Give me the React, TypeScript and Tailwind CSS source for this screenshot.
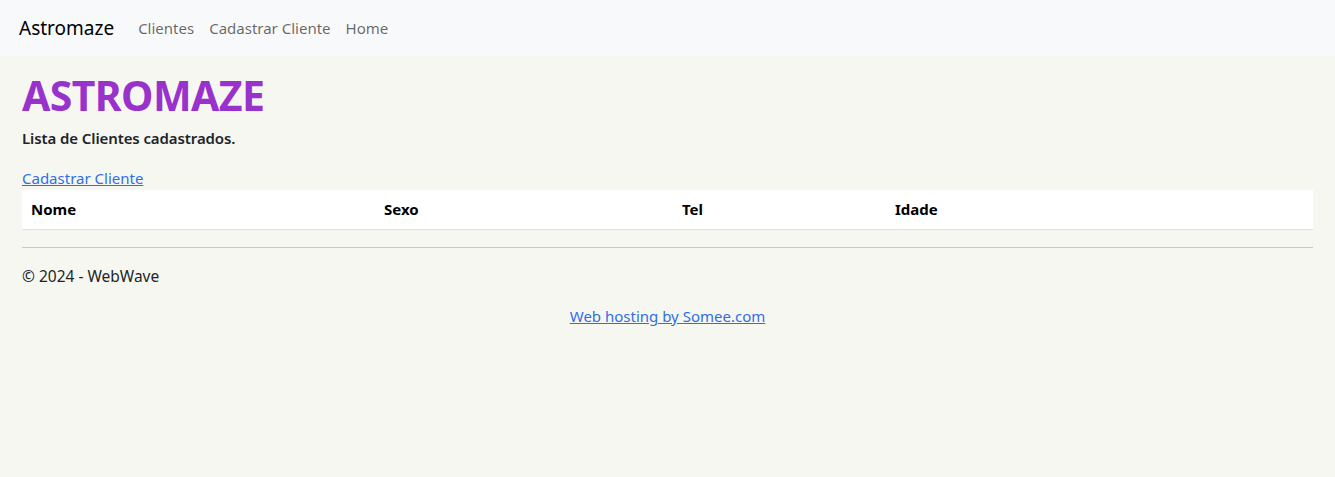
export default function App() {
  const font = { fontFamily: '"Segoe UI", "Noto Sans", "Open Sans", sans-serif' };
  return (
    <div className="min-h-[477px] bg-[#f7f7f1] text-[#212529] text-[15px]" style={font}>
      <nav className="h-[56px] bg-[#f8f9fa] flex items-center px-[19px]">
        <span className="text-[19px] text-black mr-[24px]">Astromaze</span>
        <div className="flex gap-[15px] text-[15px] text-[#00000099]">
          <span>Clientes</span>
          <span>Cadastrar Cliente</span>
          <span>Home</span>
        </div>
      </nav>
      <main className="px-[22px]">
        <h1 className="text-[41px] font-bold text-[#9932cc] leading-none mt-[19px] tracking-[-0.6px]">ASTROMAZE</h1>
        <p className="font-semibold mt-[11px] text-[15px] tracking-[-0.1px]">Lista de Clientes cadastrados.</p>
        <a className="block mt-[17px] text-[#2f6ee8] underline leading-[22px]">Cadastrar Cliente</a>
        <table className="w-full mt-[1px] bg-white border-b border-[#dee2e6] text-left">
          <thead>
            <tr className="h-[40px] text-black">
              <th className="w-[354px] px-[9px] font-bold">Nome</th>
              <th className="w-[298px] px-[8px] font-bold">Sexo</th>
              <th className="w-[213px] px-[8px] font-bold">Tel</th>
              <th className="px-[8px] font-bold">Idade</th>
            </tr>
          </thead>
        </table>
        <hr className="mt-[17px] border-t border-[#c8c8c4]" />
        <p className="mt-[17px] text-[15.5px]">© 2024 - WebWave</p>
      </main>
      <div className="text-center mt-[17px]">
        <a className="text-[#2f6ee8] underline">Web hosting by Somee.com</a>
      </div>
    </div>
  );
}
